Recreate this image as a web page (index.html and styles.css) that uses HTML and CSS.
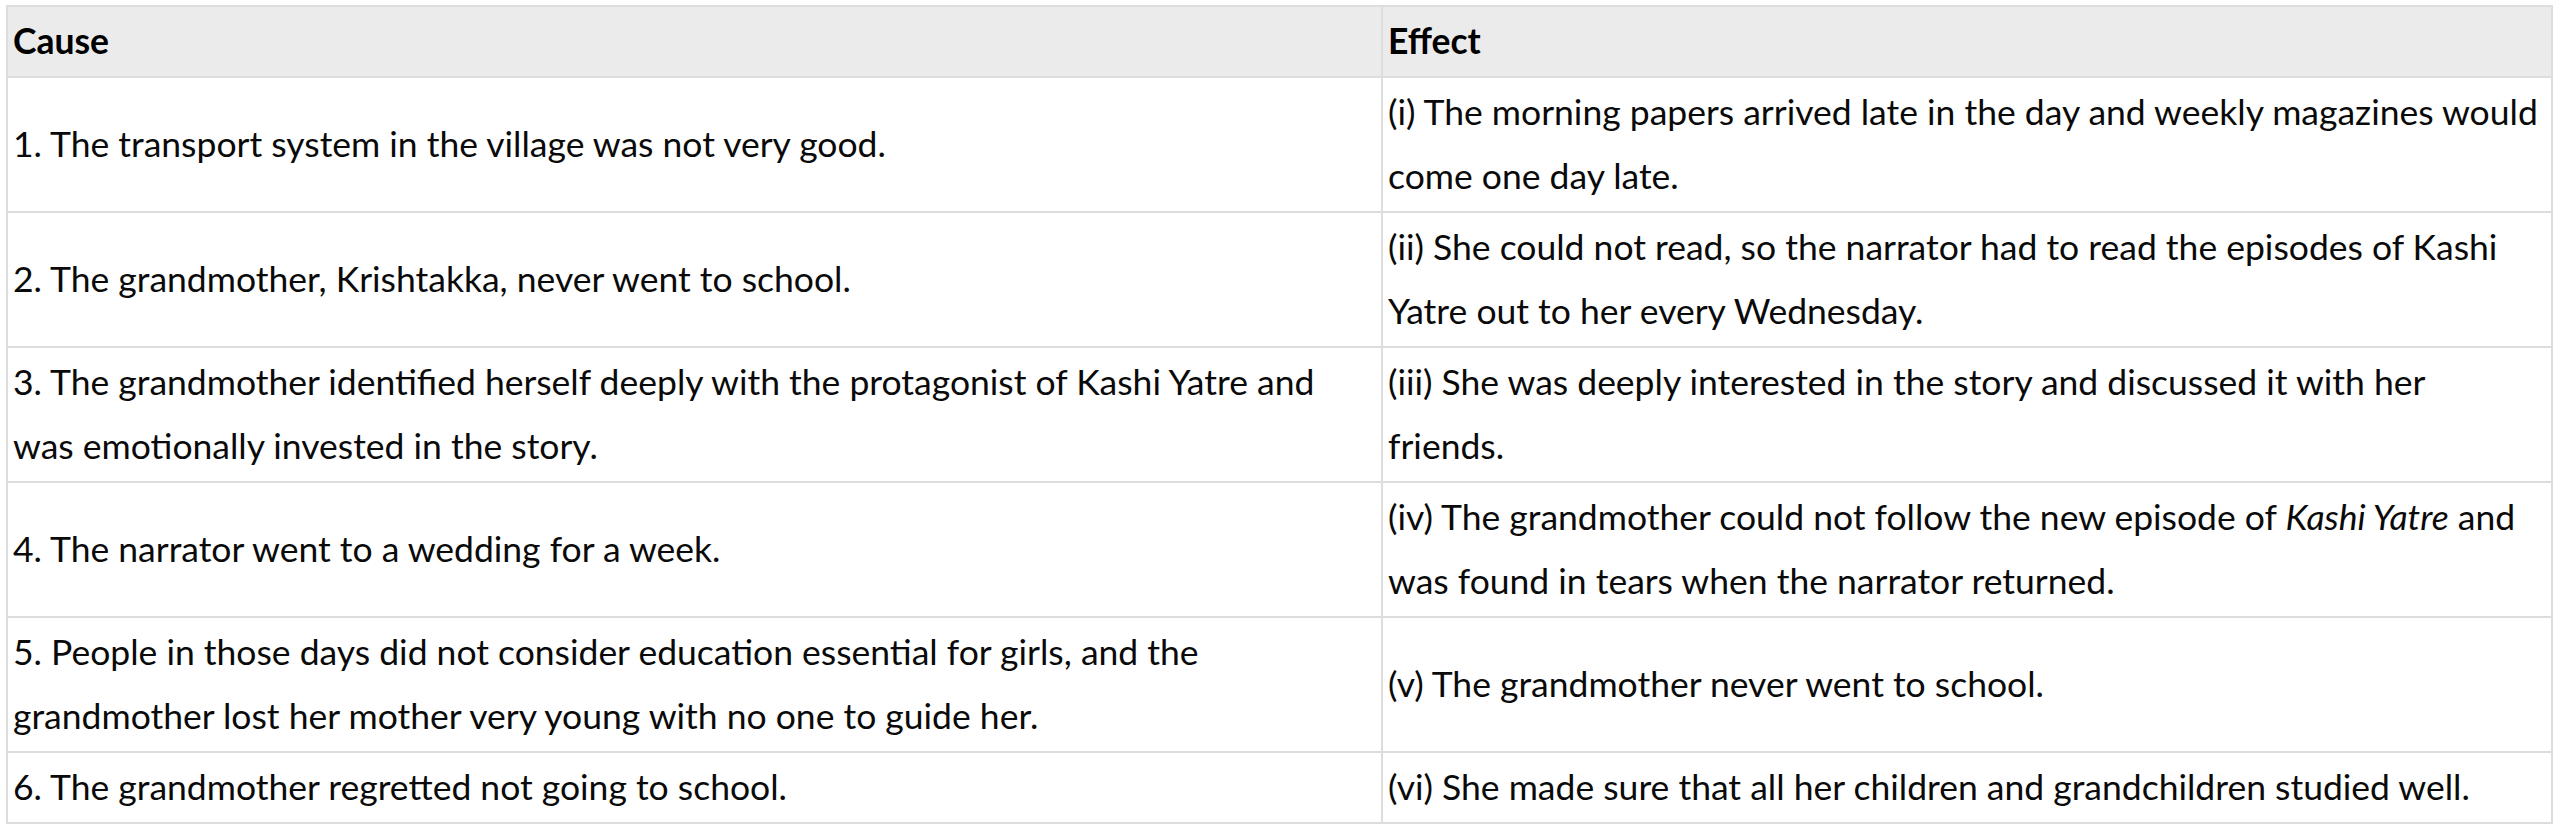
FILE: index.html
```html
<!DOCTYPE html>
<html lang="en">
<head>
<meta charset="utf-8">
<title>Cause and Effect</title>
<link rel="stylesheet" href="styles.css">
</head>
<body>
<div class="wrap">
<table class="ce-table">
  <colgroup>
    <col class="col-cause">
    <col class="col-effect">
  </colgroup>
  <thead>
    <tr><th>Cause</th><th>Effect</th></tr>
  </thead>
  <tbody>
    <tr>
      <td>1. The transport system in the village was not very good.</td>
      <td>(i) The morning papers arrived late in the day and weekly magazines would come one day late.</td>
    </tr>
    <tr>
      <td>2. The grandmother, Krishtakka, never went to school.</td>
      <td>(ii) She could not read, so the narrator had to read the episodes of Kashi Yatre out to her every Wednesday.</td>
    </tr>
    <tr>
      <td>3. The grandmother identified herself deeply with the protagonist of Kashi Yatre and was emotionally invested in the story.</td>
      <td>(iii) She was deeply interested in the story and discussed it with her friends.</td>
    </tr>
    <tr>
      <td>4. The narrator went to a wedding for a week.</td>
      <td>(iv) The grandmother could not follow the new episode of <em>Kashi Yatre</em> and was found in tears when the narrator returned.</td>
    </tr>
    <tr>
      <td>5. People in those days did not consider education essential for girls, and the grandmother lost her mother very young with no one to guide her.</td>
      <td>(v) The grandmother never went to school.</td>
    </tr>
    <tr>
      <td>6. The grandmother regretted not going to school.</td>
      <td>(vi) She made sure that all her children and grandchildren studied well.</td>
    </tr>
  </tbody>
</table>
</div>
</body>
</html>
```
FILE: styles.css
```css
html, body {
  margin: 0;
  padding: 0;
  background: #ffffff;
}
body {
  font-family: Lato, "Open Sans", sans-serif;
  color: #0a0a0a;
}
.wrap {
  padding: 5px 0 0 6px;
}
.ce-table {
  border-collapse: collapse;
  width: 2547px;
  table-layout: fixed;
  font-size: 35.5px;
  line-height: 64px;
}
.col-cause {
  width: 1375px;
}
.ce-table th,
.ce-table td {
  border: 2px solid #dddddd;
  padding: 2px 2px 3px 5px;
  text-align: left;
  vertical-align: middle;
}
.ce-table th {
  background: #ebebeb;
  font-weight: 700;
  color: #000000;
}
.ce-table em {
  font-style: italic;
}
```
